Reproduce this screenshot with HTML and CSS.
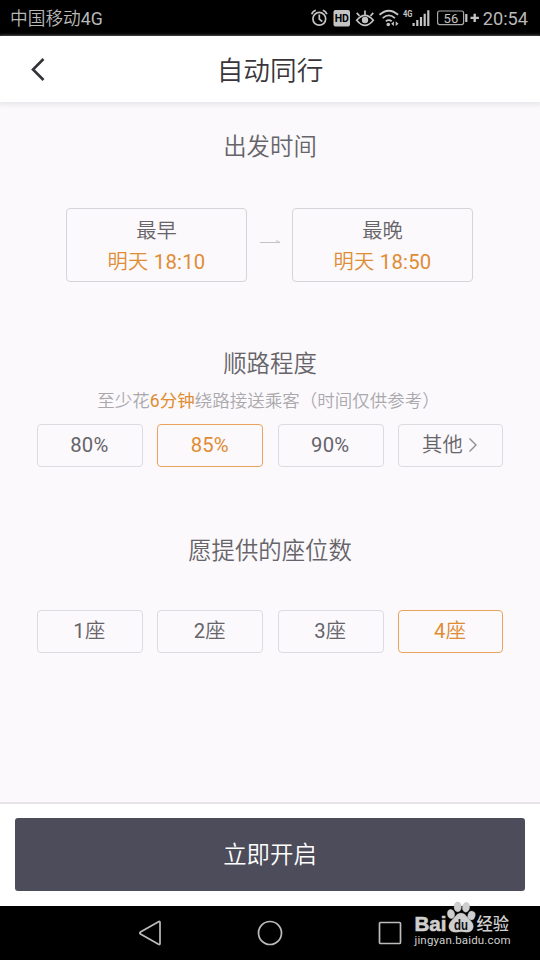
FILE: index.html
```html
<!DOCTYPE html>
<html lang="zh-CN">
<head>
<meta charset="utf-8">
<title>自动同行</title>
<link rel="stylesheet" href="styles.css">
</head>
<body>
<div class="phone">
  <div class="status">
    <span class="carrier">中国移动<i>4G</i></span>
    <svg class="status-icons" width="172" height="36" viewBox="310 0 172 36">
      <g fill="none" stroke="#c4c4c4" stroke-width="1.7">
        <circle cx="319.3" cy="18.8" r="6.4"/>
        <path d="M319.3 14.5v4.6l3 2.6M311.8 14.2q.8-3 4-3.9M326.8 14.2q-.8-3-4-3.9"/>
      </g>
      <rect x="333.5" y="10" width="16.5" height="16.5" rx="2" fill="#c4c4c4"/>
      <text class="hd" x="341.8" y="22.3" text-anchor="middle">HD</text>
      <g fill="none" stroke="#c4c4c4" stroke-width="1.7">
        <path d="M356.7 20.2Q365 10.5 373.3 20.2Q365 30.5 356.7 20.2ZM365 14.6V10.4M359.5 15.8l-2.8-2.9M370.5 15.8l2.8-2.9"/>
      </g>
      <circle cx="365" cy="20" r="3.2" fill="#c4c4c4"/>
      <g fill="none" stroke="#c4c4c4" stroke-width="1.8">
        <path d="M379.5 14.8q9.3-8.2 18.6 0M382.7 18.1q6.1-5.4 12.2 0M385.9 21.3q2.9-2.4 5.8 0"/>
      </g>
      <circle cx="388.3" cy="24.5" r="1.8" fill="#c4c4c4"/>
      <path d="M391.2 23.7l2.7-2.4v4.8zM398.5 23.7l-2.8-2.4v4.8z" fill="#c4c4c4"/>
      <text class="net" x="403" y="17.3" textLength="9.5" lengthAdjust="spacingAndGlyphs">4G</text>
      <path d="M412.5 23h2.2v3h-2.2zM416.2 20h2.2v6h-2.2zM419.9 17h2.2v9h-2.2zM423.6 13.7h2.2V26h-2.2zM427.2 10.3h2.2V26h-2.2z" fill="#c4c4c4"/>
      <rect x="437.6" y="11" width="26" height="13.6" rx="2" fill="none" stroke="#a8a8a8" stroke-width="1.2"/>
      <text class="level" x="450.9" y="22.6" text-anchor="middle">56</text>
      <path d="M465.2 14h2.2v8h-2.2zM470.5 16.8h3v-3h2.4v3h3v2.2h-3v3h-2.4v-3h-3z" fill="#c4c4c4"/>
    </svg>
    <span class="clock">20:54</span>
  </div>

  <header class="titlebar">
    <svg class="back" width="16" height="26" viewBox="0 0 16 26"><path d="M13.5 2L3 12.500l10.500 10.500" fill="none" stroke="#333338" stroke-width="2.600"/></svg>
    <h1>自动同行</h1>
  </header>

  <main>
    <section class="time">
      <h2>出发时间</h2>
      <div class="range">
        <div class="slot"><span>最早</span><b>明天 <i>18:10</i></b></div>
        <svg class="arrow" width="20" height="6" viewBox="0 0 20 6"><path d="M0 3.500H20L16 1.500" fill="none" stroke="#c4c4c7"/></svg>
        <div class="slot"><span>最晚</span><b>明天 <i>18:50</i></b></div>
      </div>
    </section>
    <section class="route">
      <h2>顺路程度</h2>
      <p>至少花<em>6分钟</em>绕路接送乘客（时间仅供参考）</p>
      <div class="options">
        <div class="option"><i>80%</i></div>
        <div class="option active"><i>85%</i></div>
        <div class="option"><i>90%</i></div>
        <div class="option">其他<svg class="more" width="10" height="16" viewBox="0 0 10 16"><path d="M1.500 1.500L8 8L1.500 14.500" fill="none" stroke="#8e8e92" stroke-width="1.4"/></svg></div>
      </div>
    </section>
    <section class="seats">
      <h2>愿提供的座位数</h2>
      <div class="options">
        <div class="option"><i>1</i>座</div>
        <div class="option"><i>2</i>座</div>
        <div class="option"><i>3</i>座</div>
        <div class="option active"><i>4</i>座</div>
      </div>
    </section>
  </main>

  <footer><div class="start">立即开启</div></footer>

  <nav>
    <svg width="24" height="26" viewBox="0 0 24 26"><path d="M22 2.200Q22 1 20.500 1.700L2.500 12Q1.200 13 2.500 14L20.500 24.300Q22 25 22 23.800Z" fill="none" stroke="#bcbcbc" stroke-width="1.700"/></svg>
    <svg width="26" height="26" viewBox="0 0 26 26"><circle cx="13" cy="13" r="11.500" fill="none" stroke="#bcbcbc" stroke-width="1.700"/></svg>
    <svg width="24" height="24" viewBox="0 0 24 24"><rect x="1.500" y="1.500" width="21" height="21" rx="1" fill="none" stroke="#bcbcbc" stroke-width="1.700"/></svg>
  </nav>

  <svg class="brand" width="110" height="50" viewBox="410 900 110 50">
    <text class="logo" x="414.500" y="930.700" textLength="32" lengthAdjust="spacingAndGlyphs">Bai</text>
    <g fill="#cfcfcf" stroke="#a8a8a8" stroke-width=".3">
      <ellipse cx="451" cy="914" rx="3.700" ry="4.700" transform="rotate(-15 451 914)"/>
      <ellipse cx="457.700" cy="907" rx="3.700" ry="4.900"/>
      <ellipse cx="466" cy="907.300" rx="3.700" ry="4.900" transform="rotate(10 466 907.300)"/>
      <ellipse cx="471.500" cy="915.500" rx="3.700" ry="4.500" transform="rotate(15 471.500 915.500)"/>
      <path d="M461 913C465.500 913 467 917.500 470.500 920.500C476 925.500 473 932.300 467 932.300Q461 931 456 932.300C448.500 932.500 446.500 925.500 451.500 920.500C455 917.500 456.500 913 461 913Z"/>
    </g>
    <text class="du" x="461" y="929.500" text-anchor="middle" textLength="14" lengthAdjust="spacingAndGlyphs">du</text>
    <text class="site" x="476.500" y="930" textLength="32.500" lengthAdjust="spacingAndGlyphs">经验</text>
    <text class="url" x="414.500" y="944.300" textLength="96" lengthAdjust="spacing">jingyan.baidu.com</text>
  </svg>
</div>
</body>
</html>
```
FILE: styles.css
```css
* { box-sizing: border-box; }
body { margin: 0; }
.phone {
  position: relative;
  width: 540px;
  height: 960px;
  display: flex;
  flex-direction: column;
  overflow: hidden;
  background: #fbf9fc;
  color: #666469;
  font-family: Roboto, "Noto Sans CJK SC", sans-serif;
  font-weight: 350;
}
h1, h2, p { margin: 0; font-weight: 350; }
b, em { font-weight: 350; font-style: normal; color: #e08c32; }
i, em { font-weight: 400; font-style: normal; }
svg { display: block; flex: none; }
.status {
  height: 36px;
  flex: none;
  display: flex;
  align-items: center;
  padding: 0 12px 0 10px;
  background: #000;
  color: #b8b8b8;
}
.carrier { font-size: 17.700px; line-height: 38px; padding-top: 1px; }
.status-icons { margin-left: auto; }
.clock { width: 46px; text-align: right; font-size: 18.200px; font-weight: 400; line-height: 38px; padding-top: 1px; }
.hd { font: 700 10.500px Roboto, sans-serif; fill: #000; }
.net { font: 700 9px Roboto, sans-serif; fill: #c4c4c4; }
.level { font: 400 13px Roboto, sans-serif; fill: #c4c4c4; }

.titlebar {
  height: 66px;
  flex: none;
  display: grid;
  grid-template-columns: 60px 1fr 60px;
  align-items: center;
  background: #fff;
  box-shadow: 0 2px 4px 1px #e9e7ea;
}
.back { margin-left: 30px; }
h1 { text-align: center; font-size: 26.700px; line-height: 66px; color: #38363a; padding-top: 2px; }

main { flex: 1; }
section { display: flex; flex-direction: column; align-items: center; }
h2 { font-size: 23.400px; line-height: 34px; }
.time { padding-top: 28px; }
.range { display: flex; align-items: center; gap: 12.500px; margin: 44px 1px 0 0; }
.arrow { margin-top: -6px; }
.slot {
  width: 181px;
  height: 74px;
  padding-top: 6px;
  display: flex;
  flex-direction: column;
  align-items: center;
  border: 1px solid #d6d4d8;
  border-radius: 4px;
  font-size: 20.300px;
  line-height: 32px;
}
.slot b { letter-spacing: .25px; margin-top: -1px; }
.route { padding-top: 65px; }
.route p { margin: 7px 3px 0 0; font-size: 17.500px; line-height: 26px; color: #aaa8ac; }
.route .options { margin-top: 10px; }
.options { display: grid; grid-template-columns: 106px 106px 106px 105px; gap: 14.400px; }
.option {
  height: 43px;
  display: flex;
  justify-content: center;
  align-items: center;
  padding: 0 1px 2px 0;
  border: 1px solid #dddbdf;
  border-radius: 4px;
  font-size: 20.300px;
  line-height: 30px;
  letter-spacing: .2px;
}
.option.active { border-color: #e8a45c; color: #e08c32; }
.more { margin-left: 5px; }
.seats { padding-top: 67px; }
.seats .options { margin-top: 42px; }

footer {
  height: 104px;
  flex: none;
  padding: 14px 15px 15px;
  border-top: 2px solid #e6e4e8;
  background: #fff;
}
.start {
  height: 73px;
  border-radius: 3px;
  background: #4d4c5b;
  color: #fff;
  text-align: center;
  font-size: 23.400px;
  line-height: 75px;
}
nav {
  height: 54px;
  flex: none;
  display: flex;
  justify-content: center;
  align-items: center;
  gap: 95px;
  background: #000;
}
.brand { position: absolute; left: 410px; top: 900px; }
.logo { font: 700 19.500px "Liberation Sans", sans-serif; fill: #cfcfcf; stroke: #cfcfcf; stroke-width: .6px; }
.du { font: 700 14px "Liberation Sans", sans-serif; fill: #111; }
.site { font: 500 16.500px "Noto Sans CJK SC", sans-serif; fill: #cfcfcf; }
.url { font: 400 11.500px Roboto, sans-serif; fill: #cfcfcf; }
```
